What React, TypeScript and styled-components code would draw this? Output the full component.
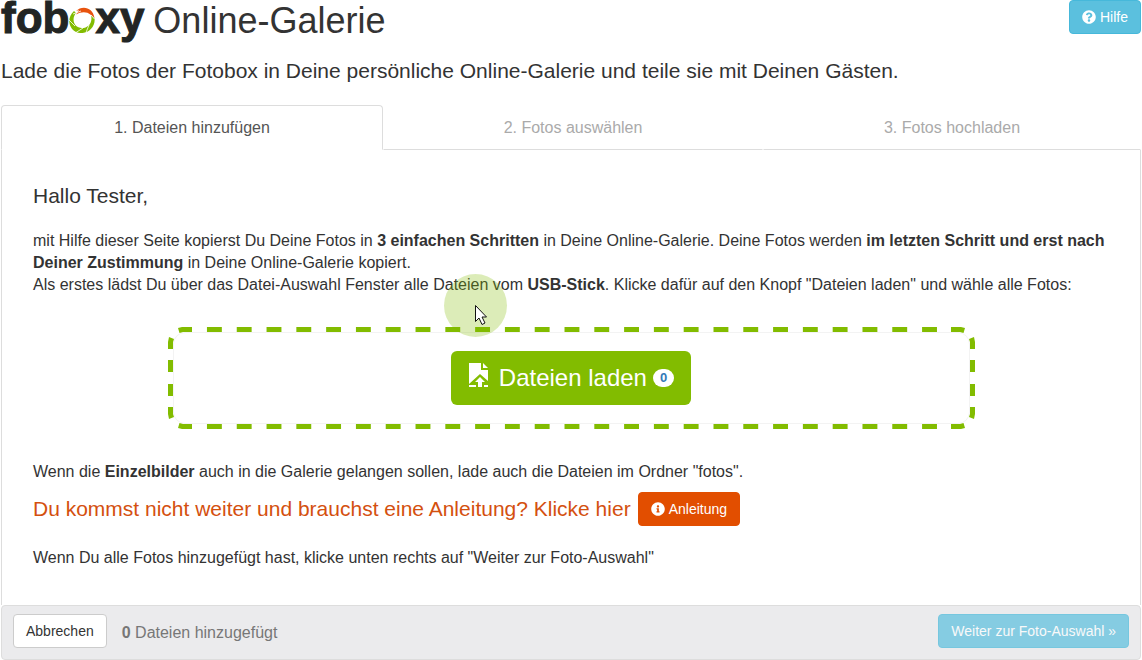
import React from 'react';
import styled, { createGlobalStyle } from 'styled-components';
import { FaInfoCircle, FaQuestionCircle } from 'react-icons/fa';

const GlobalStyle = createGlobalStyle`
  * { box-sizing: border-box; }
  body {
    margin: 0;
    background: #fff;
    color: #333;
    font: 16px/22px "Liberation Sans", Arial, sans-serif;
  }
  h1, h2, p { margin: 0; font-weight: 400; }
`;

const Page = styled.div`
  position: relative;
  padding: 0 1px;
`;

const Header = styled.header`
  display: flex;
  justify-content: space-between;
  align-items: flex-start;
`;

const Title = styled.h1`
  display: flex;
  align-items: baseline;
  gap: 9px;
  font-size: 36px;
  line-height: 36px;
  height: 46px;
`;

const Logo = styled.span`
  display: flex;
  align-items: baseline;
  color: #222524;
  font-size: 44px;
  font-weight: 700;
  -webkit-text-stroke: 1px #222524;
`;

const Ring = styled.svg`
  width: 26px;
  height: 26px;
`;

const Lead = styled.p`
  margin: 10px 0 19px;
  font-size: 21px;
  line-height: 30px;
`;

const tones = {
  info: ['#5bc0de', '#46b8da', '#fff'],
  orange: ['#e24e00', '#e24e00', '#fff'],
  plain: ['#fff', '#ccc', '#333'],
};

const Button = styled.button<{ $tone: keyof typeof tones }>`
  display: inline-flex;
  align-items: center;
  gap: 4px;
  height: 34px;
  padding: 0 12px;
  border: 1px solid ${(p) => tones[p.$tone][1]};
  border-radius: 4px;
  background: ${(p) => tones[p.$tone][0]};
  color: ${(p) => tones[p.$tone][2]};
  font: 14px/20px "Liberation Sans", Arial, sans-serif;
  white-space: nowrap;
  &:disabled { opacity: 0.7; }
`;

const Tabs = styled.nav`
  display: grid;
  grid-template-columns: 382fr 380fr 378fr;
`;

const Tab = styled.a<{ $active?: boolean }>`
  height: 45px;
  padding: 11px 0 10px;
  border: 1px solid ${(p) => (p.$active ? '#ddd' : 'transparent')};
  border-bottom-color: ${(p) => (p.$active ? 'transparent' : '#ddd')};
  border-radius: 4px 4px 0 0;
  color: ${(p) => (p.$active ? '#555' : '#aaa')};
  text-align: center;
  text-decoration: none;
`;

const Panel = styled.main`
  padding: 31px 31px 36px;
  border: solid #ddd;
  border-width: 0 1px;
`;

const Greeting = styled.h2`
  margin-bottom: 19px;
  font-size: 21px;
  line-height: 30px;
`;

const DropZone = styled.div`
  position: relative;
  width: 75%;
  margin: 31px auto 32px;
  padding: 5px;

  &::before,
  &::after {
    content: "";
    position: absolute;
    pointer-events: none;
  }
  /* long dashes along the top and bottom */
  &::before {
    inset: 0 31px;
    background:
      linear-gradient(90deg, transparent 25%, #82bc00 25% 77%, transparent 77%) 0 0 / 30px 5px round no-repeat,
      linear-gradient(90deg, transparent 25%, #82bc00 25% 77%, transparent 77%) 0 100% / 30px 5px round no-repeat;
  }
  /* shorter dashes down both sides */
  &::after {
    inset: 27px 0;
    background:
      linear-gradient(transparent 25%, #82bc00 25% 75%, transparent 75%) 0 0 / 5px 24px no-repeat round,
      linear-gradient(transparent 25%, #82bc00 25% 75%, transparent 75%) 100% 0 / 5px 24px no-repeat round;
  }
`;

const CornerMark = styled.svg<{ $right?: boolean; $bottom?: boolean }>`
  position: absolute;
  ${(p) => (p.$right ? 'right' : 'left')}: 0;
  ${(p) => (p.$bottom ? 'bottom' : 'top')}: 0;
  width: 24px;
  height: 24px;
  fill: #82bc00;
  transform: scale(${(p) => (p.$right ? -1 : 1)}, ${(p) => (p.$bottom ? -1 : 1)});
`;

function Corner(props: { $right?: boolean; $bottom?: boolean }) {
  return (
    <CornerMark viewBox="0 0 24 24" {...props}>
      <path d="M10 1L14 0H24V5H15L11.500 6Z" />
      <path d="M1 10L6 12L5 15V22H0V15Z" />
    </CornerMark>
  );
}

const Well = styled.div`
  display: flex;
  justify-content: center;
  padding: 18px;
  border: 1px solid #f3f3f3;
  border-radius: 12px;
`;

const LoadButton = styled.button`
  display: flex;
  align-items: center;
  height: 54px;
  padding: 0 17px;
  border: 0;
  border-radius: 6px;
  background: #82bc00;
  color: #fff;
  font: 24px/32px "Liberation Sans", Arial, sans-serif;
`;

const FileIcon = styled.svg`
  width: 21px;
  height: 26px;
  margin: 0 10px 6px 0;
`;

const Badge = styled.span`
  margin-left: 6px;
  padding: 0 7px;
  border-radius: 9px;
  background: #fff;
  color: #337ab7;
  font-size: 13px;
  font-weight: 700;
  line-height: 18px;
`;

const HelpRow = styled.div`
  display: flex;
  align-items: center;
  gap: 7px;
  margin: 9px 0 21px;
  color: #d4500f;
  font-size: 21px;
`;

const Footer = styled.footer`
  display: flex;
  align-items: center;
  padding: 8px 11px 11px;
  border: 1px solid #ddd;
  border-radius: 4px;
  background: #ebebed;
`;

const Status = styled.span`
  flex: 1;
  padding: 3px 0 0 15px;
  color: #777;
`;

const Pointer = styled.svg`
  position: absolute;
  top: 274px;
  left: 444px;
  width: 64px;
  height: 64px;
  pointer-events: none;
`;

export default function App() {
  return (
    <>
      <GlobalStyle />
      <Page>
        <Header>
          <Title>
            <Logo>
              fob
              <Ring viewBox="0 0 26 26">
                <path d="M5 4C-2 10 -1 21 7 25C17 29 27 21 25.500 11L22 8C24 16 19 21 13 21C5 21 2 12 7 6Z" fill="#82bc00" />
                <path d="M7 4C13 -2 24 0 25.500 11L22 8C17 4 12 5 7 7.500L10 3Z" fill="#e8530e" />
                <path d="M0 13L6 19M7 25.500L14 21M17 25.500L20 18M22 8L25.500 12M4 7L12 4" stroke="#fff" strokeWidth="0.8" fill="none" />
              </Ring>
              xy
            </Logo>
            Online-Galerie
          </Title>
          <Button type="button" $tone="info"><FaQuestionCircle />Hilfe</Button>
        </Header>
        <Lead>Lade die Fotos der Fotobox in Deine persönliche Online-Galerie und teile sie mit Deinen Gästen.</Lead>
        <Tabs>
          <Tab href="#dateien" $active>1. Dateien hinzufügen</Tab>
          <Tab href="#auswahl">2. Fotos auswählen</Tab>
          <Tab href="#hochladen">3. Fotos hochladen</Tab>
        </Tabs>
        <Panel>
          <Greeting>Hallo Tester,</Greeting>
          <p>
            mit Hilfe dieser Seite kopierst Du Deine Fotos in <b>3 einfachen Schritten</b> in Deine Online-Galerie.
            Deine Fotos werden <b>im letzten Schritt und erst nach Deiner Zustimmung</b> in Deine Online-Galerie kopiert.
          </p>
          <p>
            Als erstes lädst Du über das Datei-Auswahl Fenster alle Dateien vom <b>USB-Stick</b>. Klicke dafür auf den
            Knopf "Dateien laden" und wähle alle Fotos:
          </p>
          <DropZone>
            <Corner />
            <Corner $right />
            <Corner $bottom />
            <Corner $right $bottom />
            <Well>
              <LoadButton type="button">
                <FileIcon viewBox="0 0 21 26" fill="#fff">
                  <path d="M1 1H13V8H20V19L12 12L1 22Z" />
                  <path d="M15 1L20 6H15Z" />
                  <path d="M12 15L17 20H14V25H10V20H7ZM1 23H8V25H1ZM16 23H20V25H16Z" />
                </FileIcon>
                Dateien laden
                <Badge>0</Badge>
              </LoadButton>
            </Well>
          </DropZone>
          <p>Wenn die <b>Einzelbilder</b> auch in die Galerie gelangen sollen, lade auch die Dateien im Ordner "fotos".</p>
          <HelpRow>
            Du kommst nicht weiter und brauchst eine Anleitung? Klicke hier
            <Button type="button" $tone="orange"><FaInfoCircle />Anleitung</Button>
          </HelpRow>
          <p>Wenn Du alle Fotos hinzugefügt hast, klicke unten rechts auf "Weiter zur Foto-Auswahl"</p>
        </Panel>
        <Footer>
          <Button type="button" $tone="plain">Abbrechen</Button>
          <Status><b>0</b> Dateien hinzugefügt</Status>
          <Button type="button" $tone="info" disabled>Weiter zur Foto-Auswahl »</Button>
        </Footer>
        <Pointer viewBox="0 0 64 64">
          <circle cx="31.500" cy="31.500" r="31.500" fill="#82bc00" fillOpacity="0.28" />
          <path d="M31.500 31.500V47.500L35 44L38 50.500L41 49L38 43H42.500Z" fill="#fff" stroke="#111" />
        </Pointer>
      </Page>
    </>
  );
}
